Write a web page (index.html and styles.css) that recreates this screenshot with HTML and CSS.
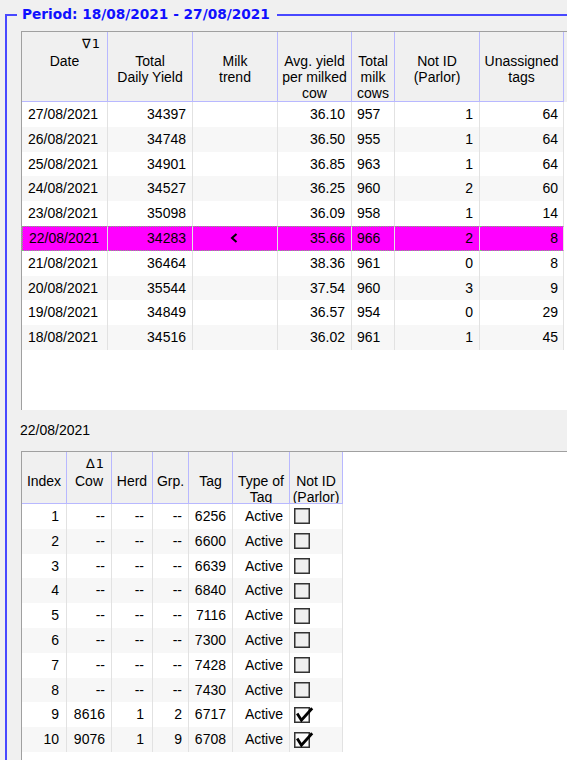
FILE: index.html
```html
<!DOCTYPE html>
<html>
<head>
<meta charset="utf-8">
<title>Period</title>
<link rel="stylesheet" href="styles.css">
</head>
<body>
<fieldset class="period">
  <legend class="period-title">Period: 18/08/2021 - 27/08/2021</legend>

  <div class="grid daily">
    <div class="hrow">
      <div class="hc"><span class="sort">∇1</span>Date</div>
      <div class="hc">Total<br>Daily Yield</div>
      <div class="hc">Milk<br>trend</div>
      <div class="hc">Avg. yield<br>per milked<br>cow</div>
      <div class="hc">Total<br>milk<br>cows</div>
      <div class="hc">Not ID<br>(Parlor)</div>
      <div class="hc">Unassigned<br>tags</div>
    </div>
    <div class="row"><div class="c l">27/08/2021</div><div class="c r">34397</div><div class="c m"></div><div class="c r">36.10</div><div class="c l5">957</div><div class="c r">1</div><div class="c r5">64</div></div>
    <div class="row"><div class="c l">26/08/2021</div><div class="c r">34748</div><div class="c m"></div><div class="c r">36.50</div><div class="c l5">955</div><div class="c r">1</div><div class="c r5">64</div></div>
    <div class="row"><div class="c l">25/08/2021</div><div class="c r">34901</div><div class="c m"></div><div class="c r">36.85</div><div class="c l5">963</div><div class="c r">1</div><div class="c r5">64</div></div>
    <div class="row"><div class="c l">24/08/2021</div><div class="c r">34527</div><div class="c m"></div><div class="c r">36.25</div><div class="c l5">960</div><div class="c r">2</div><div class="c r5">60</div></div>
    <div class="row"><div class="c l">23/08/2021</div><div class="c r">35098</div><div class="c m"></div><div class="c r">36.09</div><div class="c l5">958</div><div class="c r">1</div><div class="c r5">14</div></div>
    <div class="row sel"><div class="c l">22/08/2021</div><div class="c r">34283</div><div class="c m"><svg class="trend" viewBox="0 0 8 10" width="8" height="10" aria-label="&lt;"><polyline points="6.5,1 2,5 6.5,9"/></svg></div><div class="c r">35.66</div><div class="c l5">966</div><div class="c r">2</div><div class="c r5">8</div></div>
    <div class="row"><div class="c l">21/08/2021</div><div class="c r">36464</div><div class="c m"></div><div class="c r">38.36</div><div class="c l5">961</div><div class="c r">0</div><div class="c r5">8</div></div>
    <div class="row"><div class="c l">20/08/2021</div><div class="c r">35544</div><div class="c m"></div><div class="c r">37.54</div><div class="c l5">960</div><div class="c r">3</div><div class="c r5">9</div></div>
    <div class="row"><div class="c l">19/08/2021</div><div class="c r">34849</div><div class="c m"></div><div class="c r">36.57</div><div class="c l5">954</div><div class="c r">0</div><div class="c r5">29</div></div>
    <div class="row"><div class="c l">18/08/2021</div><div class="c r">34516</div><div class="c m"></div><div class="c r">36.02</div><div class="c l5">961</div><div class="c r">1</div><div class="c r5">45</div></div>
  </div>

  <div class="detail-label">22/08/2021</div>

  <div class="grid tags">
    <div class="hrow">
      <div class="hc">Index</div>
      <div class="hc"><span class="sort">∆1</span>Cow</div>
      <div class="hc">Herd</div>
      <div class="hc">Grp.</div>
      <div class="hc">Tag</div>
      <div class="hc">Type of<br>Tag</div>
      <div class="hc">Not ID<br>(Parlor)</div>
    </div>
    <div class="row"><div class="c r7">1</div><div class="c r">--</div><div class="c r8">--</div><div class="c r">--</div><div class="c r">6256</div><div class="c r">Active</div><div class="c cb"><svg class="box" viewBox="0 0 20 16" width="20" height="16"><rect x="0.75" y="0.75" width="14.5" height="14.5" class="frame"/></svg></div></div>
    <div class="row"><div class="c r7">2</div><div class="c r">--</div><div class="c r8">--</div><div class="c r">--</div><div class="c r">6600</div><div class="c r">Active</div><div class="c cb"><svg class="box" viewBox="0 0 20 16" width="20" height="16"><rect x="0.75" y="0.75" width="14.5" height="14.5" class="frame"/></svg></div></div>
    <div class="row"><div class="c r7">3</div><div class="c r">--</div><div class="c r8">--</div><div class="c r">--</div><div class="c r">6639</div><div class="c r">Active</div><div class="c cb"><svg class="box" viewBox="0 0 20 16" width="20" height="16"><rect x="0.75" y="0.75" width="14.5" height="14.5" class="frame"/></svg></div></div>
    <div class="row"><div class="c r7">4</div><div class="c r">--</div><div class="c r8">--</div><div class="c r">--</div><div class="c r">6840</div><div class="c r">Active</div><div class="c cb"><svg class="box" viewBox="0 0 20 16" width="20" height="16"><rect x="0.75" y="0.75" width="14.5" height="14.5" class="frame"/></svg></div></div>
    <div class="row"><div class="c r7">5</div><div class="c r">--</div><div class="c r8">--</div><div class="c r">--</div><div class="c r">7116</div><div class="c r">Active</div><div class="c cb"><svg class="box" viewBox="0 0 20 16" width="20" height="16"><rect x="0.75" y="0.75" width="14.5" height="14.5" class="frame"/></svg></div></div>
    <div class="row"><div class="c r7">6</div><div class="c r">--</div><div class="c r8">--</div><div class="c r">--</div><div class="c r">7300</div><div class="c r">Active</div><div class="c cb"><svg class="box" viewBox="0 0 20 16" width="20" height="16"><rect x="0.75" y="0.75" width="14.5" height="14.5" class="frame"/></svg></div></div>
    <div class="row"><div class="c r7">7</div><div class="c r">--</div><div class="c r8">--</div><div class="c r">--</div><div class="c r">7428</div><div class="c r">Active</div><div class="c cb"><svg class="box" viewBox="0 0 20 16" width="20" height="16"><rect x="0.75" y="0.75" width="14.5" height="14.5" class="frame"/></svg></div></div>
    <div class="row"><div class="c r7">8</div><div class="c r">--</div><div class="c r8">--</div><div class="c r">--</div><div class="c r">7430</div><div class="c r">Active</div><div class="c cb"><svg class="box" viewBox="0 0 20 16" width="20" height="16"><rect x="0.75" y="0.75" width="14.5" height="14.5" class="frame"/></svg></div></div>
    <div class="row"><div class="c r7">9</div><div class="c r">8616</div><div class="c r8">1</div><div class="c r">2</div><div class="c r">6717</div><div class="c r">Active</div><div class="c cb"><svg class="box checked" viewBox="0 0 20 16" width="20" height="16"><rect x="0.75" y="0.75" width="14.5" height="14.5" class="frame"/><path class="tick" d="M3.2 6.6 L7.4 13.2 L18.2 1.2"/></svg></div></div>
    <div class="row"><div class="c r7">10</div><div class="c r">9076</div><div class="c r8">1</div><div class="c r">9</div><div class="c r">6708</div><div class="c r">Active</div><div class="c cb"><svg class="box checked" viewBox="0 0 20 16" width="20" height="16"><rect x="0.75" y="0.75" width="14.5" height="14.5" class="frame"/><path class="tick" d="M3.2 6.6 L7.4 13.2 L18.2 1.2"/></svg></div></div>
  </div>
</fieldset>
</body>
</html>
```

FILE: styles.css
```css
html, body {
  margin: 0;
  padding: 0;
  height: 100%;
  overflow: hidden;
  background: #f0f0f0;
}

body {
  font-family: "Liberation Sans", Arial, sans-serif;
  font-size: 14px;
  color: #000;
}

.period {
  margin: 6px 0 0 5px;
  padding: 8px 0 0 0;
  border: 0;
  border-top: 2px solid #4848ff;
  border-left: 2px solid #4848ff;
  min-width: 0;
}

.period-title {
  margin-left: 10px;
  padding: 0 7px 0 5px;
  font-family: "DejaVu Sans", sans-serif;
  font-weight: bold;
  font-size: 13.7px;
  line-height: 17px;
  color: #1010ff;
}

.grid {
  margin-left: 14px;
  background: #fff;
  border-top: 1px solid #a0a0a0;
  border-left: 1px solid #a0a0a0;
  overflow: hidden;
}

.daily {
  height: 378px;
}

.tags {
  height: 308px;
}

.hrow,
.row {
  display: grid;
}

.daily .hrow,
.daily .row {
  grid-template-columns: 86px 85px 85px 74px 43px 85px 84px;
}

.tags .hrow,
.tags .row {
  grid-template-columns: 45px 45px 41px 36px 44px 57px 53px;
}

.daily .hrow {
  background: #f0f0f0;
  height: 70px;
}

.tags .hrow {
  height: 52px;
}

.hc {
  position: relative;
  box-sizing: border-box;
  background: #f0f0f0;
  border-right: 1px solid #b8b8ff;
  border-bottom: 1px solid #b8b8ff;
  padding-top: 21px;
  line-height: 16px;
  text-align: center;
  overflow: hidden;
  white-space: nowrap;
}

.sort {
  position: absolute;
  top: 5px;
  right: 6px;
  line-height: 14px;
  font-family: "DejaVu Sans", sans-serif;
  font-size: 13px;
  font-weight: normal;
  letter-spacing: 1px;
}

.c {
  box-sizing: border-box;
  height: 24.8px;
  line-height: 24.8px;
  border-right: 1px solid #e2e2e2;
  white-space: nowrap;
  overflow: hidden;
  background: #fff;
}

.row:nth-child(odd) .c {
  background: #f7f7f7;
}

.row.sel .c {
  background: #ff00ff;
  border-top: 1px dotted #72c872;
  border-bottom: 1px dotted #72c872;
  line-height: 22.8px;
}

.row.sel .c:first-child {
  border-left: 1px dotted #72c872;
}

.l { text-align: left; padding-left: 6px; }
.l5 { text-align: left; padding-left: 5px; }
.r { text-align: right; padding-right: 6px; }
.r5 { text-align: right; padding-right: 5px; }
.r7 { text-align: right; padding-right: 7px; }
.r8 { text-align: right; padding-right: 8px; }

.m {
  display: flex;
  align-items: center;
  justify-content: center;
}

.trend {
  display: block;
  margin-left: -2px;
}

.trend polyline {
  fill: none;
  stroke: #000;
  stroke-width: 2;
}

.detail-label {
  height: 41px;
  line-height: 41px;
  padding-left: 13px;
}

.cb {
  padding-left: 4px;
  display: flex;
  align-items: center;
}

.box {
  display: block;
  overflow: visible;
}

.box .frame {
  fill: #efefef;
  stroke: #333;
  stroke-width: 1.5;
}

.box.checked .frame {
  fill: #fbfbfb;
}

.box .tick {
  fill: none;
  stroke: #000;
  stroke-width: 2.8;
  stroke-linejoin: miter;
}
```
